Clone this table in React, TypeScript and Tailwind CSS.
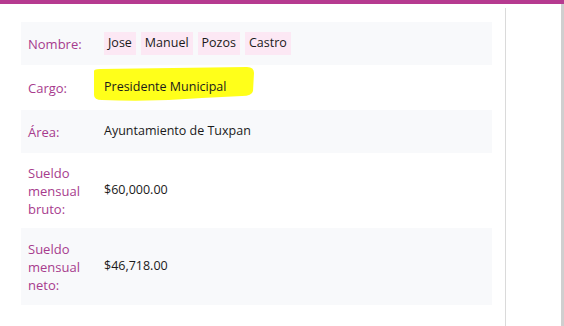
const font = { fontFamily: '"Open Sans", "Noto Sans", sans-serif' }

function Label({ children }: { children: React.ReactNode }) {
  return <div className="w-[83px] shrink-0 pl-[7px] pr-[10px] text-[#a73b8d] leading-[18px] text-[13px]">{children}</div>
}

function Chip({ children }: { children: React.ReactNode }) {
  return <span className="bg-[#fce8f4] px-[4px] h-[23px] flex items-center">{children}</span>
}

export default function App() {
  return (
    <div className="w-[564px] h-[326px] bg-white text-[12.5px] text-[#1a1a1a] overflow-hidden" style={font}>
      <div className="h-[4px] bg-[#b63a90]" />
      <div className="flex h-[322px]">
        <div className="w-[505px] shrink-0 pt-[18px] pl-[21px]">
          <div className="w-[471px]">
            {/* Nombre */}
            <div className="flex items-center h-[43px] bg-[#f8f9fb]">
              <Label>Nombre:</Label>
              <div className="flex gap-[5px]">
                <Chip>Jose</Chip>
                <Chip>Manuel</Chip>
                <Chip>Pozos</Chip>
                <Chip>Castro</Chip>
              </div>
            </div>
            {/* Cargo, highlighted by hand */}
            <div className="relative flex items-center h-[45px]">
              <svg className="absolute left-[71px] top-[2px]" width="164" height="36" viewBox="0 0 164 36">
                <path
                  d="M2,5 Q1,2 8,2 L155,0 Q162,0 162,6 L161,24 Q160,29 150,29 L110,31 Q60,35 10,33 Q2,33 2,28 Z"
                  fill="#ffff1a"
                />
              </svg>
              <Label>Cargo:</Label>
              <div className="relative">Presidente Municipal</div>
            </div>
            {/* Área */}
            <div className="flex items-center h-[43px] bg-[#f8f9fb]">
              <Label>Área:</Label>
              <div>Ayuntamiento de Tuxpan</div>
            </div>
            {/* Sueldo bruto */}
            <div className="flex items-center h-[75px]">
              <Label>Sueldo mensual bruto:</Label>
              <div>$60,000.00</div>
            </div>
            {/* Sueldo neto */}
            <div className="flex items-center h-[77px] bg-[#f8f9fb]">
              <Label>Sueldo mensual neto:</Label>
              <div>$46,718.00</div>
            </div>
          </div>
        </div>
        <div className="w-[1px] mt-[4px] bg-[#dadada]" />
        <div className="flex-1" />
        <div className="w-[3px] bg-[#cfcfcf]" />
      </div>
    </div>
  )
}
